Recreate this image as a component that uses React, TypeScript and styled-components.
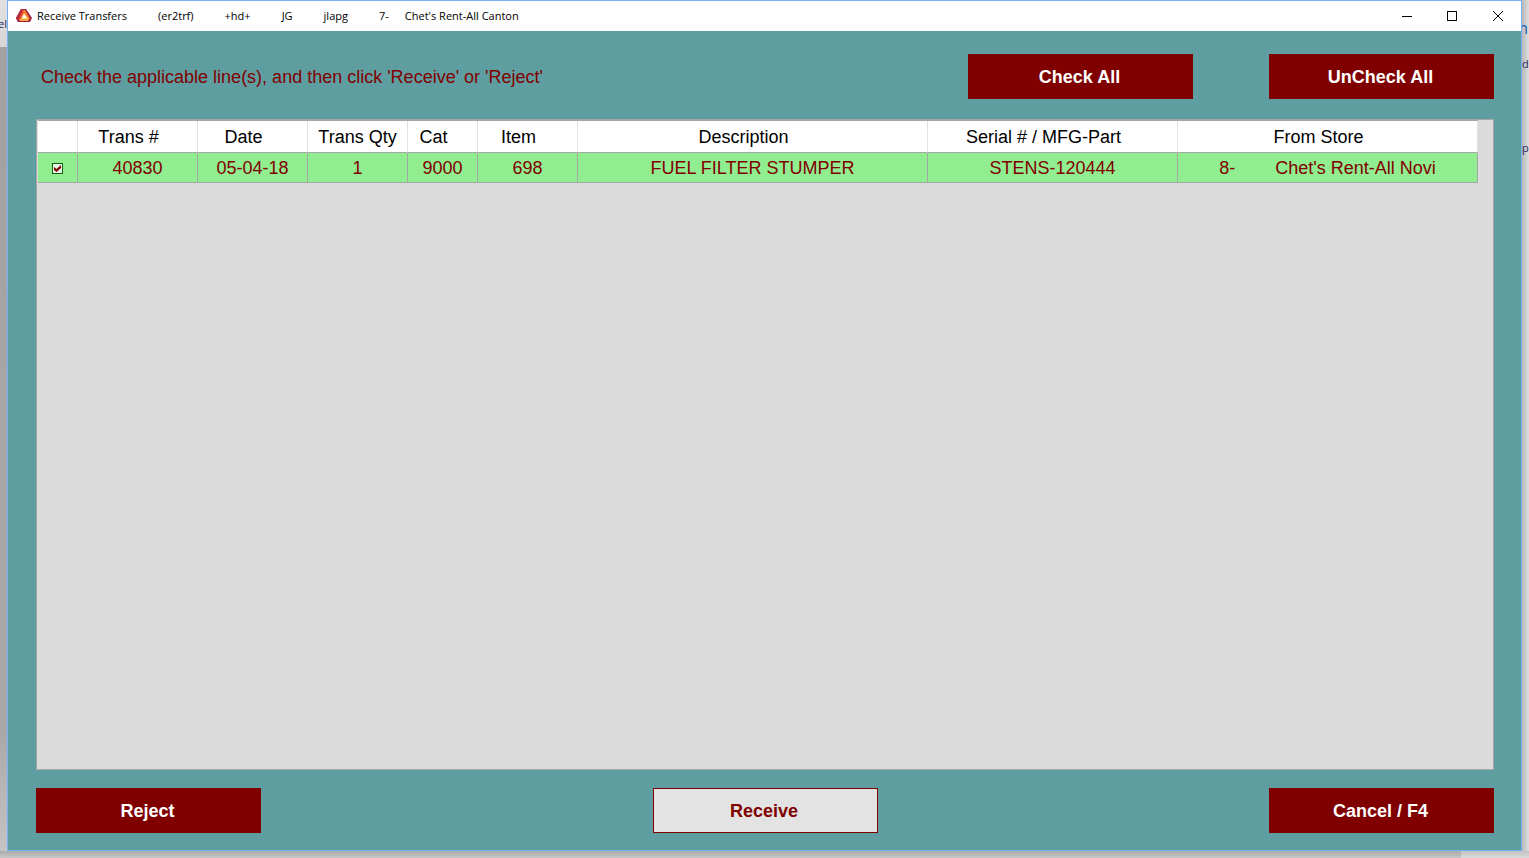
import React, { useState } from "react";
import styled, { createGlobalStyle, css } from "styled-components";

const teal = "#5f9ea0";
const maroon = "#800000";
const edge = "#76b3f5";
const rule = "#a6a6a6";

const GlobalStyle = createGlobalStyle`
  * { box-sizing: border-box; }
  body { margin: 0; font-family: "Liberation Sans", Arial, sans-serif; font-size: 18px; color: #000; }
`;

const Desktop = styled.div`
  display: grid;
  grid-template-columns: 7px minmax(0, 1fr) 7px;
  grid-template-rows: minmax(0, 1fr) 7px;
  height: 100vh;
  overflow: hidden;
`;

const Behind = styled.div<{ $side: "left" | "right" }>`
  display: flex;
  flex-direction: column;
  overflow: hidden;
  white-space: nowrap;
  font-family: "Open Sans", sans-serif;
  font-size: 11px;
  line-height: 16px;
  color: #26265c;
  background: ${(p) =>
    p.$side === "left"
      ? "linear-gradient(to bottom, #e2e2e2 0, #d6d6d6 47px, #a2a2a4 47px, #a9a9ab 86%, #c4c4c4 100%)"
      : "linear-gradient(to right, #b8b8b8, #dedede)"};
  align-items: ${(p) => (p.$side === "left" ? "flex-end" : "flex-start")};
  padding-top: ${(p) => (p.$side === "left" ? 16 : 20)}px;
`;

const BehindTitle = styled.span`
  align-self: flex-end;
  padding-right: 1px;
  font-size: 16px;
  color: #1b62b5;
  margin-bottom: 20px;
`;

const BehindLine = styled.span`
  margin-bottom: 68px;
`;

const Below = styled.div`
  grid-column: 1 / -1;
  display: flex;
  background: linear-gradient(to bottom, #ababab, #c6c6c6);
`;

const BelowCorner = styled.div`
  width: 68px;
  margin-left: auto;
  background: linear-gradient(to bottom, #c2c2c2, #dadada);
`;

const Window = styled.main`
  display: flex;
  flex-direction: column;
  min-width: 0;
  border: 1px solid ${edge};
  background: ${teal};
`;

const TitleBar = styled.header`
  display: flex;
  align-items: center;
  height: 30px;
  padding-left: 8px;
  background: #fff;
  font-family: "Open Sans", sans-serif;
  font-size: 11px;
  line-height: 16px;
`;

const Logo = styled.svg`
  width: 16px;
  height: 16px;
  margin-right: 5px;
`;

const TitleParts = styled.h1`
  display: flex;
  gap: 31px;
  margin: 0;
  font: inherit;
`;

const StoreName = styled.span`
  display: flex;
  gap: 16px;
`;

const WindowControls = styled.div`
  display: flex;
  margin-left: auto;
`;

const ControlButton = styled.button`
  display: grid;
  place-items: center;
  width: 46px;
  height: 28px;
  padding: 0;
  border: 0;
  background: none;
`;

const Content = styled.section`
  flex: 1;
  display: flex;
  flex-direction: column;
  min-height: 0;
  padding: 23px 27px 17px 28px;
`;

const TopRow = styled.div`
  display: flex;
  align-items: center;
  gap: 76px;
`;

const Hint = styled.p`
  flex: 1;
  margin: 0;
  padding: 2px 0 0 5px;
  color: ${maroon};
`;

const ActionButton = styled.button<{ $light?: boolean }>`
  width: 225px;
  height: 45px;
  padding: 2px 2px 0 0;
  border: 1px solid ${maroon};
  background: ${(p) => (p.$light ? "#e3e3e3" : maroon)};
  color: ${(p) => (p.$light ? maroon : "#fff")};
  font: bold 18px "Liberation Sans", Arial, sans-serif;
`;

const ListPanel = styled.div`
  flex: 1;
  min-height: 0;
  margin: 20px 0 18px;
  overflow: hidden;
  padding: 0 15px 0 1px;
  border: 1px solid ${rule};
  background: #dbdbdb;
`;

const Grid = styled.table`
  width: 100%;
  table-layout: fixed;
  border-collapse: separate;
  border-spacing: 0;
  border-top: 1px solid ${rule};
`;

const cell = css`
  overflow: hidden;
  white-space: pre;
  text-align: center;
  font-weight: normal;
  line-height: 20px;
`;

const HeadCell = styled.th<{ $wide?: boolean }>`
  ${cell}
  height: 32px;
  padding: 0 ${(p) => (p.$wide ? 0 : 18)}px 0 0;
  background: #fff;
  border-right: 1px solid #e2e2e2;
  border-bottom: 1px solid ${rule};
`;

const DataCell = styled.td`
  ${cell}
  height: 30px;
  padding: 0;
  background: #90ee90;
  color: ${maroon};
  border-right: 1px solid ${rule};
  border-bottom: 1px solid ${rule};
`;

const CheckLabel = styled.label`
  display: grid;
  place-items: center;
  padding-top: 2px;
`;

const CheckBox = styled.input`
  grid-area: 1 / 1;
  appearance: none;
  width: 11px;
  height: 11px;
  margin: 0;
  border: 1px solid #0f5f0f;
  background: #e6f8e6;
`;

const CheckMark = styled.svg`
  grid-area: 1 / 1;
  width: 11px;
  height: 11px;
  pointer-events: none;
`;

const BottomRow = styled.footer`
  display: flex;
  justify-content: space-between;
`;

const columns: { title: string; width?: number; wide?: boolean }[] = [
  { title: "", width: 40 },
  { title: "Trans #", width: 120 },
  { title: "Date", width: 110 },
  { title: "Trans Qty", width: 100, wide: true },
  { title: "Cat", width: 70 },
  { title: "Item", width: 100 },
  { title: "Description" },
  { title: "Serial # / MFG-Part", width: 250 },
  { title: "From Store", width: 300 },
];

const transfers = [
  ["40830", "05-04-18", "1", "9000", "698", "FUEL FILTER STUMPER", "STENS-120444", "8-        Chet's Rent-All Novi"],
];

export default function App() {
  const [checked, setChecked] = useState(transfers.map(() => true));
  const setAll = (value: boolean) => setChecked(transfers.map(() => value));

  return (
    <>
      <GlobalStyle />
      <Desktop>
        <Behind $side="left" aria-hidden="true">el</Behind>
        <Window>
          <TitleBar>
            <Logo viewBox="0 0 16 16" aria-hidden="true">
              <path d="M5 1h5l6 9-2 4H2l-2-4z" fill="#a3203f" />
              <path d="M5 1h3L3 12l-1 2-2-4z" fill="#b8283d" />
              <path d="M7 2L3 11l3 0 3-6z" fill="#ef5a30" />
              <path d="M7 2l2 0 5 9-3 0z" fill="#f58a2c" />
              <path d="M3 11h10l-1 2H4z" fill="#fba63c" />
              <path d="M8 5l4 6H5z" fill="#fdd06a" />
              <path d="M8 6l3 4H6z" fill="#fff" />
            </Logo>
            <TitleParts>
              <span>Receive Transfers</span>
              <span>(er2trf)</span>
              <span>+hd+</span>
              <span>JG</span>
              <span>jlapg</span>
              <StoreName>
                <span>7-</span>
                <span>Chet's Rent-All Canton</span>
              </StoreName>
            </TitleParts>
            <WindowControls>
              <ControlButton type="button" aria-label="Minimize">
                <svg width="11" height="11" stroke="#000" fill="none"><path d="M1 5.500h10" /></svg>
              </ControlButton>
              <ControlButton type="button" aria-label="Maximize">
                <svg width="11" height="11" stroke="#000" fill="none" shapeRendering="crispEdges"><path d="M.5.5h9v9h-9z" /></svg>
              </ControlButton>
              <ControlButton type="button" aria-label="Close">
                <svg width="11" height="11" stroke="#000" fill="none"><path d="M0 0l10 10M10 0L0 10" /></svg>
              </ControlButton>
            </WindowControls>
          </TitleBar>
          <Content>
            <TopRow>
              <Hint>Check the applicable line(s), and then click 'Receive' or 'Reject'</Hint>
              <ActionButton type="button" onClick={() => setAll(true)}>Check All</ActionButton>
              <ActionButton type="button" onClick={() => setAll(false)}>UnCheck All</ActionButton>
            </TopRow>
            <ListPanel>
              <Grid>
                <colgroup>
                  {columns.map((c) => (
                    <col key={c.title} width={c.width} />
                  ))}
                </colgroup>
                <thead>
                  <tr>
                    {columns.map((c) => (
                      <HeadCell key={c.title} scope="col" $wide={c.wide}>{c.title}</HeadCell>
                    ))}
                  </tr>
                </thead>
                <tbody>
                  {transfers.map((row, i) => (
                    <tr key={row[0]}>
                      <DataCell>
                        <CheckLabel>
                          <CheckBox
                            type="checkbox"
                            aria-label={`Transfer ${row[0]}`}
                            checked={checked[i]}
                            onChange={() => setChecked(checked.map((v, j) => (j === i ? !v : v)))}
                          />
                          {checked[i] && (
                            <CheckMark viewBox="0 0 11 11" aria-hidden="true">
                              <path d="M2 4l2.500 2L9 2v3L4.500 9 2 7z" fill={maroon} />
                            </CheckMark>
                          )}
                        </CheckLabel>
                      </DataCell>
                      {row.map((value, j) => (
                        <DataCell key={j}>{value}</DataCell>
                      ))}
                    </tr>
                  ))}
                </tbody>
              </Grid>
            </ListPanel>
            <BottomRow>
              <ActionButton type="button">Reject</ActionButton>
              <ActionButton type="button" $light>Receive</ActionButton>
              <ActionButton type="button">Cancel / F4</ActionButton>
            </BottomRow>
          </Content>
        </Window>
        <Behind $side="right" aria-hidden="true">
          <BehindTitle>n</BehindTitle>
          <BehindLine>d</BehindLine>
          <BehindLine>p</BehindLine>
        </Behind>
        <Below>
          <BelowCorner />
        </Below>
      </Desktop>
    </>
  );
}
